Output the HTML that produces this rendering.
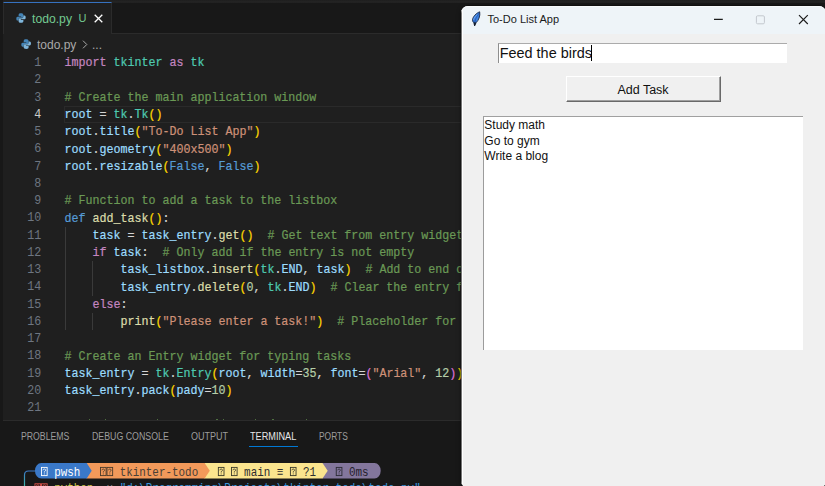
<!DOCTYPE html>
<html>
<head>
<meta charset="utf-8">
<style>
*{margin:0;padding:0;box-sizing:border-box;}
html,body{width:825px;height:486px;overflow:hidden;background:#1f1f1f;}
body{position:relative;font-family:"Liberation Sans",sans-serif;}
.abs{position:absolute;}
#topstrip{left:0;top:0;width:825px;height:3px;background:linear-gradient(#1c1c1c 0,#232323 1px,#232323 2.4px,#1c1c1c 3px);}
#leftstrip{left:0;top:0;width:3px;height:486px;background:#181818;}
#tabbar{left:3px;top:3px;width:822px;height:30.5px;background:#181818;border-bottom:1px solid #2b2b2b;}
#tab{left:3px;top:2.2px;width:109px;height:31.8px;background:#1f1f1f;border-top:1px solid #3672c0;border-right:1px solid #2b2b2b;border-left:1px solid #2b2b2b;}
.ui{font-family:"Liberation Sans",sans-serif;font-size:12px;white-space:pre;line-height:14px;}
#code{left:0;top:54.8px;width:470px;font-family:"Liberation Mono",monospace;font-size:11.67px;line-height:17.25px;color:#d4d4d4;}
.ln{position:absolute;left:0;width:41.2px;text-align:right;color:#6e7681;transform:scaleY(1.08);transform-origin:0 11.74px;top:0.3px;}
.l{position:relative;height:17.25px;}
.c{position:absolute;left:64.5px;top:0.6px;white-space:pre;-webkit-text-stroke:0.2px;transform:scaleY(1.13);transform-origin:0 11.74px;}
.k{color:#c586c0}.t{color:#4ec9b0}.g{color:#6a9955}.v{color:#9cdcfe}.f{color:#dcdcaa}.s{color:#ce9178}.b{color:#569cd6}.n{color:#b5cea8}.y{color:#ffd700}.p{color:#da70d6}.w{color:#d4d4d4}
#panel{left:3px;top:420px;width:822px;height:66px;background:#181818;border-top:1px solid #2b2b2b;}
.pt{position:absolute;transform-origin:0 0;white-space:pre;top:431px;font-size:10px;color:#9d9d9d;letter-spacing:0px;font-family:"Liberation Sans",sans-serif;line-height:12px;}
.term{font-family:"Liberation Mono",monospace;font-size:10.92px;line-height:16px;white-space:pre;transform:scaleY(1.16);transform-origin:0 10.9px;}
#win{left:461px;top:6px;width:365px;height:482px;background:#f0f0f0;border-radius:7px;overflow:hidden;box-shadow:0 0 0 0.5px rgba(0,0,0,0.4),0 1px 5px rgba(0,0,0,0.4);}
#titlebar{left:0;top:0;width:366px;height:27.5px;background:#eef4f8;}
</style>
</head>
<body>
<div id="topstrip" class="abs"></div>
<div id="tabbar" class="abs"></div>
<div id="leftstrip" class="abs"></div>
<div id="tab" class="abs"></div>

<!-- tab contents -->
<svg class="abs" style="left:15.5px;top:13px" width="10" height="10" viewBox="0 0 16 16"><path d="M7.8 0.5C5 0.5 4.2 1.6 4.2 3v2h4v1H2.5C1 6 0.5 7.5 0.5 9s0.5 3 2 3h1.7V10c0-1.4 1-2.3 2.3-2.3h3.3c1.2 0 2-0.8 2-2V3c0-1.5-1.2-2.5-4-2.5z" fill="#4584b6"/><path d="M8.2 15.5c2.8 0 3.6-1.1 3.6-2.5v-2h-4v-1h5.7c1.5 0 2-1.500 2-3s-0.500-3-2-3h-1.700V6c0 1.400-1 2.300-2.300 2.300H6.200c-1.200 0-2 .8-2 2V13c0 1.500 1.200 2.500 4 2.500z" fill="#7fb5da"/></svg>
<div class="abs ui" style="left:32px;top:12px;color:#73c991;font-size:12.2px;">todo.py</div>
<div class="abs ui" style="left:78.5px;top:11.3px;color:#73c991;font-size:11px;">U</div>
<svg class="abs" style="left:94px;top:14px" width="9" height="9" viewBox="0 0 9 9"><path d="M0.700 0.700L8.300 8.300M8.300 0.700L0.700 8.300" stroke="#ffffff" stroke-width="1.300" fill="none"/></svg>

<!-- breadcrumb -->
<svg class="abs" style="left:20.8px;top:39.3px" width="10.300" height="10.300" viewBox="0 0 16 16"><path d="M7.8 0.5C5 0.5 4.2 1.6 4.2 3v2h4v1H2.5C1 6 0.5 7.5 0.5 9s0.5 3 2 3h1.7V10c0-1.4 1-2.3 2.3-2.3h3.3c1.2 0 2-0.8 2-2V3c0-1.5-1.2-2.5-4-2.5z" fill="#4584b6"/><path d="M8.2 15.5c2.8 0 3.6-1.1 3.6-2.5v-2h-4v-1h5.7c1.5 0 2-1.500 2-3s-0.500-3-2-3h-1.700V6c0 1.400-1 2.300-2.300 2.300H6.200c-1.200 0-2 .8-2 2V13c0 1.500 1.200 2.500 4 2.500z" fill="#7fb5da"/></svg>
<div class="abs ui" style="left:37px;top:38px;color:#a9a9a9;font-size:12px;">todo.py</div>
<svg class="abs" style="left:82px;top:40px" width="6" height="9" viewBox="0 0 6 9"><path d="M1 0.700L4.800 4.500L1 8.300" stroke="#a9a9a9" stroke-width="1" fill="none"/></svg>
<div class="abs ui" style="left:92px;top:38px;color:#a9a9a9;font-size:12px;">...</div>

<!-- current line highlight -->
<div class="abs" style="left:64px;top:106px;width:400px;height:17px;border:1px solid #2a2a2a;"></div>
<!-- indent guides -->
<div class="abs" style="left:65px;top:226.5px;width:1px;height:103px;background:#3a3a3a;"></div>
<div class="abs" style="left:92px;top:261px;width:1px;height:35px;background:#3a3a3a;"></div>
<div class="abs" style="left:92px;top:313px;width:1px;height:16.5px;background:#3a3a3a;"></div>

<div id="code" class="abs">
<div class="l"><span class="ln">1</span><span class="c"><span class="k">import</span> <span class="t">tkinter</span> <span class="k">as</span> <span class="t">tk</span></span></div>
<div class="l"><span class="ln">2</span></div>
<div class="l"><span class="ln">3</span><span class="c g"># Create the main application window</span></div>
<div class="l"><span class="ln" style="color:#cccccc">4</span><span class="c"><span class="v">root</span> = <span class="t">tk</span>.<span class="t">Tk</span><span class="y">()</span></span></div>
<div class="l"><span class="ln">5</span><span class="c"><span class="v">root</span>.<span class="v">title</span><span class="y">(</span><span class="s">"To-Do List App"</span><span class="y">)</span></span></div>
<div class="l"><span class="ln">6</span><span class="c"><span class="v">root</span>.<span class="v">geometry</span><span class="y">(</span><span class="s">"400x500"</span><span class="y">)</span></span></div>
<div class="l"><span class="ln">7</span><span class="c"><span class="v">root</span>.<span class="v">resizable</span><span class="y">(</span><span class="b">False</span>, <span class="b">False</span><span class="y">)</span></span></div>
<div class="l"><span class="ln">8</span></div>
<div class="l"><span class="ln">9</span><span class="c g"># Function to add a task to the listbox</span></div>
<div class="l"><span class="ln">10</span><span class="c"><span class="b">def</span> <span class="f">add_task</span><span class="y">()</span>:</span></div>
<div class="l"><span class="ln">11</span><span class="c">    <span class="v">task</span> = <span class="v">task_entry</span>.<span class="f">get</span><span class="y">()</span>  <span class="g"># Get text from entry widget</span></span></div>
<div class="l"><span class="ln">12</span><span class="c">    <span class="k">if</span> <span class="v">task</span>:  <span class="g"># Only add if the entry is not empty</span></span></div>
<div class="l"><span class="ln">13</span><span class="c">        <span class="v">task_listbox</span>.<span class="f">insert</span><span class="y">(</span><span class="t">tk</span>.<span class="v">END</span>, <span class="v">task</span><span class="y">)</span>  <span class="g"># Add to end of listbox</span></span></div>
<div class="l"><span class="ln">14</span><span class="c">        <span class="v">task_entry</span>.<span class="f">delete</span><span class="y">(</span><span class="n">0</span>, <span class="t">tk</span>.<span class="v">END</span><span class="y">)</span>  <span class="g"># Clear the entry field</span></span></div>
<div class="l"><span class="ln">15</span><span class="c">    <span class="k">else</span>:</span></div>
<div class="l"><span class="ln">16</span><span class="c">        <span class="f">print</span><span class="y">(</span><span class="s">"Please enter a task!"</span><span class="y">)</span>  <span class="g"># Placeholder for feedback</span></span></div>
<div class="l"><span class="ln">17</span></div>
<div class="l"><span class="ln">18</span><span class="c g"># Create an Entry widget for typing tasks</span></div>
<div class="l"><span class="ln">19</span><span class="c"><span class="v">task_entry</span> = <span class="t">tk</span>.<span class="t">Entry</span><span class="y">(</span><span class="v">root</span>, <span class="v">width</span>=<span class="n">35</span>, <span class="v">font</span>=<span class="p">(</span><span class="s">"Arial"</span>, <span class="n">12</span><span class="p">)</span><span class="y">)</span></span></div>
<div class="l"><span class="ln">20</span><span class="c"><span class="v">task_entry</span>.<span class="v">pack</span><span class="y">(</span><span class="v">pady</span>=<span class="n">10</span><span class="y">)</span></span></div>
<div class="l"><span class="ln">21</span></div>
</div>

<!-- line 22 ascender tips -->
<div class="abs" style="left:88.8px;top:418.6px;width:1.2px;height:1.2px;background:#4f7040;"></div><div class="abs" style="left:104.8px;top:418.6px;width:1.2px;height:1.2px;background:#4f7040;"></div><div class="abs" style="left:156.8px;top:418.6px;width:1.2px;height:1.2px;background:#4f7040;"></div><div class="abs" style="left:216.4px;top:418.6px;width:1.2px;height:1.2px;background:#4f7040;"></div><div class="abs" style="left:223.3px;top:418.6px;width:1.2px;height:1.2px;background:#4f7040;"></div><div class="abs" style="left:255.0px;top:418.6px;width:1.2px;height:1.2px;background:#4f7040;"></div><div class="abs" style="left:271.5px;top:418.6px;width:2.6px;height:1.2px;background:#4f7040;"></div><div class="abs" style="left:305.9px;top:418.6px;width:1.2px;height:1.2px;background:#4f7040;"></div>
<!-- panel -->
<div id="panel" class="abs"></div>
<div class="pt" style="left:21px;transform:scaleX(0.871);" id="p1">PROBLEMS</div>
<div class="pt" style="left:92px;transform:scaleX(0.880);" id="p2">DEBUG CONSOLE</div>
<div class="pt" style="left:191px;transform:scaleX(0.903);" id="p3">OUTPUT</div>
<div class="pt" style="left:250.400px;color:#e7e7e7;transform:scaleX(0.916);" id="p4">TERMINAL</div>
<div class="abs" style="left:249px;top:446px;width:49px;height:1px;background:#0078d4;"></div>
<div class="pt" style="left:318.500px;transform:scaleX(0.840);" id="p5">PORTS</div>

<!-- terminal prompt -->
<svg class="abs" style="left:0;top:0" width="470" height="486" viewBox="0 0 470 486">
<defs><linearGradient id="lg" x1="0" y1="0" x2="0" y2="1"><stop offset="0" stop-color="#3a78c8"/><stop offset="1" stop-color="#3fb5a8"/></linearGradient></defs>
<path d="M35 471H28.500Q24.500 471 24.500 475V486" stroke="url(#lg)" stroke-width="1.200" fill="none"/>
<path d="M322.20 463.00H374.50a6.20 7.75 0 0 1 0 15.50H322.20z" fill="#83769c"/>
<path d="M204.30 463.00H322.50L327.70 470.75L322.50 478.50H204.30z" fill="#fbe58e"/>
<path d="M86.40 463.00H204.60L209.80 470.75L204.60 478.50H86.40z" fill="#f2995a"/>
<path d="M41.35 463.00H86.70L91.70 470.75L86.70 478.50H41.35a6.40 7.75 0 0 1 0 -15.50z" fill="#3a78c8"/>
<rect x="41.50" y="467.40" width="5.65" height="8.20" fill="none" stroke="#ffffff" stroke-width="0.90"/><path d="M43.03 470.30q0-1.300 1.300-1.300t1.300 1.200q0 .8-1.300 1.500v.9" fill="none" stroke="#ffffff" stroke-width="0.800"/><rect x="43.88" y="473.50" width="0.9" height="0.9" fill="#ffffff"/>
<rect x="100.45" y="467.40" width="5.65" height="8.20" fill="none" stroke="#4a3a2a" stroke-width="0.90"/><path d="M101.98 470.30q0-1.300 1.300-1.300t1.300 1.200q0 .8-1.300 1.500v.9" fill="none" stroke="#4a3a2a" stroke-width="0.800"/><rect x="102.83" y="473.50" width="0.9" height="0.9" fill="#4a3a2a"/>
<rect x="107.00" y="467.40" width="5.65" height="8.20" fill="none" stroke="#4a3a2a" stroke-width="0.90"/><path d="M108.53 470.30q0-1.300 1.300-1.300t1.300 1.200q0 .8-1.300 1.500v.9" fill="none" stroke="#4a3a2a" stroke-width="0.800"/><rect x="109.38" y="473.50" width="0.9" height="0.9" fill="#4a3a2a"/>
<rect x="218.35" y="467.40" width="5.65" height="8.20" fill="none" stroke="#3a3a2a" stroke-width="0.90"/><path d="M219.87 470.30q0-1.300 1.300-1.300t1.300 1.200q0 .8-1.300 1.500v.9" fill="none" stroke="#3a3a2a" stroke-width="0.800"/><rect x="220.72" y="473.50" width="0.9" height="0.9" fill="#3a3a2a"/>
<rect x="231.45" y="467.40" width="5.65" height="8.20" fill="none" stroke="#3a3a2a" stroke-width="0.90"/><path d="M232.97 470.30q0-1.300 1.300-1.300t1.300 1.200q0 .8-1.300 1.500v.9" fill="none" stroke="#3a3a2a" stroke-width="0.800"/><rect x="233.82" y="473.50" width="0.9" height="0.9" fill="#3a3a2a"/>
<rect x="290.40" y="467.40" width="5.65" height="8.20" fill="none" stroke="#3a3a2a" stroke-width="0.90"/><path d="M291.92 470.30q0-1.300 1.300-1.300t1.300 1.200q0 .8-1.300 1.500v.9" fill="none" stroke="#3a3a2a" stroke-width="0.800"/><rect x="292.77" y="473.50" width="0.9" height="0.9" fill="#3a3a2a"/>
<rect x="336.25" y="467.40" width="5.65" height="8.20" fill="none" stroke="#2a2a33" stroke-width="0.90"/><path d="M337.77 470.30q0-1.300 1.300-1.300t1.300 1.200q0 .8-1.300 1.500v.9" fill="none" stroke="#2a2a33" stroke-width="0.800"/><rect x="338.62" y="473.50" width="0.9" height="0.9" fill="#2a2a33"/>
<rect x="34.95" y="483.80" width="5.65" height="8.20" fill="none" stroke="#e0524a" stroke-width="0.90"/><path d="M36.48 486.10q0-1.300 1.300-1.300t1.300 1.200q0 .8-1.300 1.500v.9" fill="none" stroke="#e0524a" stroke-width="0.800"/><rect x="37.33" y="489.30" width="0.9" height="0.9" fill="#e0524a"/>
<rect x="41.50" y="483.80" width="5.65" height="8.20" fill="none" stroke="#e0524a" stroke-width="0.90"/><path d="M43.03 486.10q0-1.300 1.300-1.300t1.300 1.200q0 .8-1.300 1.500v.9" fill="none" stroke="#e0524a" stroke-width="0.800"/><rect x="43.88" y="489.30" width="0.9" height="0.9" fill="#e0524a"/>
</svg>
<div class="abs term" style="left:54.15px;top:464.6px;color:#ffffff;">pwsh</div>
<div class="abs term" style="left:119.65px;top:464.6px;color:#4a4036;">tkinter-todo</div>
<div class="abs term" style="left:244.10px;top:464.6px;color:#2e2e2e;">main</div>
<div class="abs term" style="left:276.85px;top:464.6px;color:#2e2e2e;">≡</div>
<div class="abs term" style="left:303.05px;top:464.6px;color:#2e2e2e;">?1</div>
<div class="abs term" style="left:348.90px;top:464.6px;color:#24202c;">0ms</div>
<div class="abs term" style="left:54.15px;top:480.9px;color:#cfc84c;">python</div>
<div class="abs term" style="left:100.00px;top:480.9px;color:#8a8a8a;">-u</div>
<div class="abs term" style="left:119.65px;top:480.9px;color:#3a96dd;">"d:\Programming\Projects\tkinter-todo\todo.py"</div>

<!-- tk window -->
<div id="win" class="abs">
  <div id="titlebar" class="abs"></div>
  <svg class="abs" style="left:8.7px;top:4px" width="14" height="18" viewBox="0 0 14 18">
    <defs><linearGradient id="fg" x1="0" y1="1" x2="1" y2="0"><stop offset="0" stop-color="#2a63c4"/><stop offset="0.55" stop-color="#3f86e6"/><stop offset="1" stop-color="#2f6fd0"/></linearGradient></defs>
    <path d="M9.7 1.8C6.5 3 2.8 6.600 2.500 9.800C2.400 11.200 3 12.100 3.800 12.700L4.600 15.800L6.100 12.700C8.500 10.500 10.500 6 9.700 1.800z" fill="url(#fg)" stroke="#1d2a44" stroke-width="0.900" stroke-linejoin="round"/>
    <path d="M4.300 12.400L4.600 15.900L5.800 12.800z" fill="#141820" stroke="#141820" stroke-width="0.500"/>
    <path d="M8.800 3.400C7 5.800 5.400 9 4.800 12.600" stroke="#163a80" stroke-width="0.600" fill="none" opacity="0.800"/>
    <path d="M7.600 4.200C5.400 5.800 3.900 8 3.500 10" stroke="#8fc0ff" stroke-width="0.700" fill="none" opacity="0.700"/>
  </svg>
  <div class="abs" style="left:26.5px;top:7px;font-size:11px;color:#1b1b1b;line-height:13px;white-space:pre;">To-Do List App</div>
  <svg class="abs" style="left:250px;top:5px" width="110" height="18" viewBox="0 0 110 18">
    <path d="M3 8.400H11.800" stroke="#1c1c1c" stroke-width="1.100" fill="none"/>
    <rect x="45.400" y="4.800" width="8" height="8" rx="1.200" fill="none" stroke="#c3c8ce" stroke-width="1"/>
    <path d="M88 4.200L96.800 13M96.800 4.200L88 13" stroke="#1c1c1c" stroke-width="1.150" fill="none"/>
  </svg>
  <!-- entry -->
  <div class="abs" style="left:36.8px;top:36.6px;width:289.7px;height:20px;background:#fff;border-top:1.3px solid #ababab;border-left:1px solid #8e8e8e;"></div>
  <div class="abs" style="left:38.7px;top:38px;font-size:14.45px;color:#111;line-height:18px;white-space:pre;">Feed the birds</div>
  <div class="abs" style="left:129.7px;top:39px;width:1.6px;height:16px;background:#000;"></div>
  <!-- button -->
  <div class="abs" style="left:105px;top:70px;width:155px;height:26px;background:#f0f0f0;border-top:1px solid #fff;border-left:1px solid #fff;border-right:1px solid #696969;border-bottom:1px solid #696969;box-shadow:inset -1px -1px 0 #a0a0a0;"></div>
  <div class="abs" style="left:105px;top:76.7px;width:154px;text-align:center;font-size:12.500px;color:#111;line-height:14px;white-space:pre;">Add Task</div>
  <!-- listbox -->
  <div class="abs" style="left:22.1px;top:110px;width:319.9px;height:233.7px;background:#fff;border-top:1.2px solid #a0a0a0;border-left:1.3px solid #9c9c9c;"></div>
  <div class="abs" style="left:23.3px;top:112px;font-size:12px;color:#111;line-height:15.500px;white-space:pre;">Study math
Go to gym
Write a blog</div>
  <div class="abs" style="left:0;top:0;width:365px;height:482px;border-top:1px solid rgba(255,255,255,0.6);border-radius:7px;"></div>
  <div class="abs" style="left:0;top:5px;width:1px;height:472px;background:#767676;"></div>
  <div class="abs" style="left:1px;top:4px;width:1px;height:474px;background:#ffffff;"></div>
</div>
</body>
</html>
